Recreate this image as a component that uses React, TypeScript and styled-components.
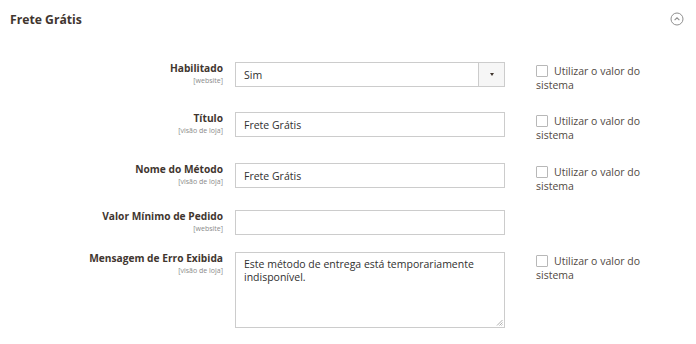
import React from "react"
import styled, { createGlobalStyle } from "styled-components"

const GlobalStyle = createGlobalStyle`
  html, body {
    margin: 0;
    padding: 0;
    background: #ffffff;
  }
  body {
    font-family: "Open Sans", "DejaVu Sans", sans-serif;
    color: #303030;
  }
`

const Page = styled.div`
  width: 696px;
  height: 344px;
  overflow: hidden;
  background: #fff;
`

const Header = styled.div`
  display: flex;
  align-items: center;
  justify-content: space-between;
  height: 38px;
  padding: 0 12px 0 10px;
`

const Title = styled.h3`
  margin: 0;
  font-size: 12.2px;
  font-weight: 700;
  color: #41362f;
`

const Form = styled.div`
  padding-top: 24px;
`

interface IRow {
  $space: number
}

const Row = styled.div<IRow>`
  display: flex;
  align-items: flex-start;
  height: ${p => p.$space}px;
`

const LabelCol = styled.div`
  width: 223px;
  display: flex;
  flex-direction: column;
  align-items: flex-end;
  text-align: right;
`

const LabelText = styled.span`
  font-size: 10.2px;
  font-weight: 700;
  color: #41362f;
  line-height: 13px;
`

const Scope = styled.span`
  font-size: 7px;
  color: #8a8a8a;
  line-height: 10px;
  margin-top: 1px;
`

const Control = styled.div`
  margin-left: 12px;
  width: 270px;
`

const Field = styled.div`
  box-sizing: border-box;
  height: 25px;
  border: 1px solid #cccccc;
  display: flex;
  align-items: center;
  font-size: 10.5px;
  color: #303030;
  background: #fff;
`

const FieldText = styled.span`
  flex: 1;
  padding-left: 8px;
`

const SelectButton = styled.span`
  width: 25px;
  height: 100%;
  border-left: 1px solid #cccccc;
  background: #f6f6f6;
  display: flex;
  align-items: center;
  justify-content: center;

  &::after {
    content: "";
    border-left: 2.5px solid transparent;
    border-right: 2.5px solid transparent;
    border-top: 3px solid #41362f;
  }
`

const TextArea = styled.div`
  position: relative;
  box-sizing: border-box;
  height: 76px;
  border: 1px solid #cccccc;
  padding: 5px 8px;
  font-size: 10.5px;
  line-height: 13px;
  color: #303030;
`

const Grip = styled.svg`
  position: absolute;
  right: 1px;
  bottom: 1px;
`

const UseSystem = styled.div`
  margin-left: 31px;
  width: 112px;
  padding-top: 2px;
  font-size: 10.5px;
  line-height: 14px;
  color: #514943;
`

const Box = styled.span`
  display: inline-block;
  box-sizing: border-box;
  width: 12px;
  height: 12px;
  border: 1px solid #b8b8b8;
  border-radius: 1px;
  vertical-align: -2px;
  margin-right: 6px;
`

const Collapse = () => (
  <svg width="14" height="14" viewBox="0 0 14 14">
    <circle cx="7" cy="7" r="6" fill="none" stroke="#8f8f8f" strokeWidth="1" />
    <path d="M4.6 8.2 L7 5.8 L9.4 8.2" fill="none" stroke="#8f8f8f" strokeWidth="1.1" />
  </svg>
)

const Use = () => (
  <UseSystem>
    <Box />
    Utilizar o valor do sistema
  </UseSystem>
)

const Label: React.FC<{ text: string; scope: string }> = ({ text, scope }) => (
  <LabelCol>
    <LabelText>{text}</LabelText>
    <Scope>{scope}</Scope>
  </LabelCol>
)

const App: React.FC = () => {
  return (
    <Page>
      <GlobalStyle />
      <Header>
        <Title>Frete Grátis</Title>
        <Collapse />
      </Header>
      <Form>
        <Row $space={50}>
          <Label text="Habilitado" scope="[website]" />
          <Control>
            <Field>
              <FieldText>Sim</FieldText>
              <SelectButton />
            </Field>
          </Control>
          <Use />
        </Row>
        <Row $space={51}>
          <Label text="Título" scope="[visão de loja]" />
          <Control>
            <Field>
              <FieldText>Frete Grátis</FieldText>
            </Field>
          </Control>
          <Use />
        </Row>
        <Row $space={47}>
          <Label text="Nome do Método" scope="[visão de loja]" />
          <Control>
            <Field>
              <FieldText>Frete Grátis</FieldText>
            </Field>
          </Control>
          <Use />
        </Row>
        <Row $space={42}>
          <Label text="Valor Mínimo de Pedido" scope="[website]" />
          <Control>
            <Field />
          </Control>
        </Row>
        <Row $space={80}>
          <Label text="Mensagem de Erro Exibida" scope="[visão de loja]" />
          <Control>
            <TextArea>
              Este método de entrega está temporariamente indisponível.
              <Grip width="7" height="7" viewBox="0 0 7 7">
                <path d="M6.5 1 L1 6.5 M6.5 3.5 L3.5 6.5 M6.5 5.5 L5.5 6.5" stroke="#9a9a9a" strokeWidth="0.8" />
              </Grip>
            </TextArea>
          </Control>
          <Use />
        </Row>
      </Form>
    </Page>
  )
}

export default App
